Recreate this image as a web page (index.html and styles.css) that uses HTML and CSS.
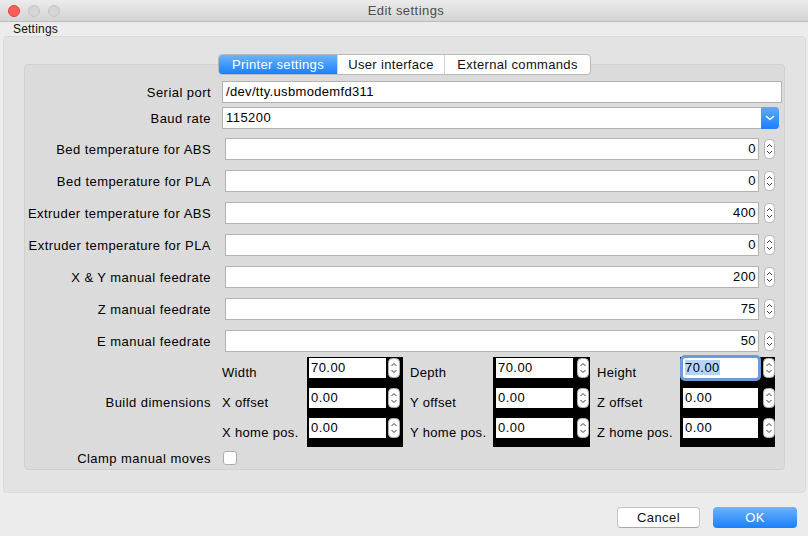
FILE: index.html
```html
<!DOCTYPE html>
<html>
<head>
<meta charset="utf-8">
<title>Edit settings</title>
<link rel="stylesheet" href="styles.css">
</head>
<body>
<div class="window">
  <div class="titlebar">
    <div class="lights">
      <span class="light red"></span>
      <span class="light gray"></span>
      <span class="light gray"></span>
    </div>
    <span class="title">Edit settings</span>
  </div>
  <div class="menubar">Settings</div>
  <div class="outer">
    <div class="pane">
      <div class="tabs">
        <div class="tab active t1">Printer settings</div>
        <div class="tab t2">User interface</div>
        <div class="tab t3">External commands</div>
      </div>
      <div class="form">
        <div class="row r-serial">
          <div class="lbl">Serial port</div>
          <div class="field"><div class="textbox">/dev/tty.usbmodemfd311</div></div>
        </div>
        <div class="row r-baud">
          <div class="lbl">Baud rate</div>
          <div class="field combo">
            <div class="combo-text">115200</div>
            <div class="combo-btn"><svg width="18" height="20" viewBox="0 0 18 20"><path d="M5.5 8.5 L9 11.5 L12.5 8.5" fill="none" stroke="#fff" stroke-width="1.6" stroke-linecap="round" stroke-linejoin="round"/></svg></div>
          </div>
        </div>
        <div class="row r-spin first">
          <div class="lbl">Bed temperature for ABS</div>
          <div class="field spin"><div class="spin-in">0</div><svg class="arr" width="11" height="20" viewBox="0 0 11 20"><rect x="0.5" y="0.5" width="10" height="19" rx="4" fill="#fff" stroke="#b3b3b3"/><path d="M3 8 L5.5 5.5 L8 8 M3 12 L5.5 14.5 L8 12" fill="none" stroke="#3a3a3a" stroke-width="1"/></svg></div>
        </div>
        <div class="row r-spin">
          <div class="lbl">Bed temperature for PLA</div>
          <div class="field spin"><div class="spin-in">0</div><svg class="arr" width="11" height="20" viewBox="0 0 11 20"><rect x="0.5" y="0.5" width="10" height="19" rx="4" fill="#fff" stroke="#b3b3b3"/><path d="M3 8 L5.5 5.5 L8 8 M3 12 L5.5 14.5 L8 12" fill="none" stroke="#3a3a3a" stroke-width="1"/></svg></div>
        </div>
        <div class="row r-spin">
          <div class="lbl">Extruder temperature for ABS</div>
          <div class="field spin"><div class="spin-in">400</div><svg class="arr" width="11" height="20" viewBox="0 0 11 20"><rect x="0.5" y="0.5" width="10" height="19" rx="4" fill="#fff" stroke="#b3b3b3"/><path d="M3 8 L5.5 5.5 L8 8 M3 12 L5.5 14.5 L8 12" fill="none" stroke="#3a3a3a" stroke-width="1"/></svg></div>
        </div>
        <div class="row r-spin">
          <div class="lbl">Extruder temperature for PLA</div>
          <div class="field spin"><div class="spin-in">0</div><svg class="arr" width="11" height="20" viewBox="0 0 11 20"><rect x="0.5" y="0.5" width="10" height="19" rx="4" fill="#fff" stroke="#b3b3b3"/><path d="M3 8 L5.5 5.5 L8 8 M3 12 L5.5 14.5 L8 12" fill="none" stroke="#3a3a3a" stroke-width="1"/></svg></div>
        </div>
        <div class="row r-spin">
          <div class="lbl">X &amp; Y manual feedrate</div>
          <div class="field spin"><div class="spin-in">200</div><svg class="arr" width="11" height="20" viewBox="0 0 11 20"><rect x="0.5" y="0.5" width="10" height="19" rx="4" fill="#fff" stroke="#b3b3b3"/><path d="M3 8 L5.5 5.5 L8 8 M3 12 L5.5 14.5 L8 12" fill="none" stroke="#3a3a3a" stroke-width="1"/></svg></div>
        </div>
        <div class="row r-spin">
          <div class="lbl">Z manual feedrate</div>
          <div class="field spin"><div class="spin-in">75</div><svg class="arr" width="11" height="20" viewBox="0 0 11 20"><rect x="0.5" y="0.5" width="10" height="19" rx="4" fill="#fff" stroke="#b3b3b3"/><path d="M3 8 L5.5 5.5 L8 8 M3 12 L5.5 14.5 L8 12" fill="none" stroke="#3a3a3a" stroke-width="1"/></svg></div>
        </div>
        <div class="row r-spin">
          <div class="lbl">E manual feedrate</div>
          <div class="field spin"><div class="spin-in">50</div><svg class="arr" width="11" height="20" viewBox="0 0 11 20"><rect x="0.5" y="0.5" width="10" height="19" rx="4" fill="#fff" stroke="#b3b3b3"/><path d="M3 8 L5.5 5.5 L8 8 M3 12 L5.5 14.5 L8 12" fill="none" stroke="#3a3a3a" stroke-width="1"/></svg></div>
        </div>
        <div class="row r-build">
          <div class="lbl">Build dimensions</div>
          <div class="field bgrid">
            <div class="bl">Width</div>
            <div class="bc"><div class="bin">70.00</div><svg class="barr" width="12" height="20" viewBox="0 0 12 20"><rect x="0.5" y="0.5" width="11" height="19" rx="4" fill="#fff" stroke="#b3b3b3"/><path d="M3.5 8 L6 5.5 L8.5 8 M3.5 12 L6 14.5 L8.5 12" fill="none" stroke="#3a3a3a" stroke-width="1"/></svg></div>
            <div class="bl pad">Depth</div>
            <div class="bc c2"><div class="bin">70.00</div><svg class="barr" width="12" height="20" viewBox="0 0 12 20"><rect x="0.5" y="0.5" width="11" height="19" rx="4" fill="#fff" stroke="#b3b3b3"/><path d="M3.5 8 L6 5.5 L8.5 8 M3.5 12 L6 14.5 L8.5 12" fill="none" stroke="#3a3a3a" stroke-width="1"/></svg></div>
            <div class="bl pad">Height</div>
            <div class="bc c3"><div class="bin focus"><span class="sel">70.00</span></div><svg class="barr" width="12" height="20" viewBox="0 0 12 20"><rect x="0.5" y="0.5" width="11" height="19" rx="4" fill="#fff" stroke="#b3b3b3"/><path d="M3.5 8 L6 5.5 L8.5 8 M3.5 12 L6 14.5 L8.5 12" fill="none" stroke="#3a3a3a" stroke-width="1"/></svg></div>

            <div class="bl">X offset</div>
            <div class="bc"><div class="bin">0.00</div><svg class="barr" width="12" height="20" viewBox="0 0 12 20"><rect x="0.5" y="0.5" width="11" height="19" rx="4" fill="#fff" stroke="#b3b3b3"/><path d="M3.5 8 L6 5.5 L8.5 8 M3.5 12 L6 14.5 L8.5 12" fill="none" stroke="#3a3a3a" stroke-width="1"/></svg></div>
            <div class="bl pad">Y offset</div>
            <div class="bc c2"><div class="bin">0.00</div><svg class="barr" width="12" height="20" viewBox="0 0 12 20"><rect x="0.5" y="0.5" width="11" height="19" rx="4" fill="#fff" stroke="#b3b3b3"/><path d="M3.5 8 L6 5.5 L8.5 8 M3.5 12 L6 14.5 L8.5 12" fill="none" stroke="#3a3a3a" stroke-width="1"/></svg></div>
            <div class="bl pad">Z offset</div>
            <div class="bc c3"><div class="bin">0.00</div><svg class="barr" width="12" height="20" viewBox="0 0 12 20"><rect x="0.5" y="0.5" width="11" height="19" rx="4" fill="#fff" stroke="#b3b3b3"/><path d="M3.5 8 L6 5.5 L8.5 8 M3.5 12 L6 14.5 L8.5 12" fill="none" stroke="#3a3a3a" stroke-width="1"/></svg></div>

            <div class="bl">X home pos.</div>
            <div class="bc"><div class="bin">0.00</div><svg class="barr" width="12" height="20" viewBox="0 0 12 20"><rect x="0.5" y="0.5" width="11" height="19" rx="4" fill="#fff" stroke="#b3b3b3"/><path d="M3.5 8 L6 5.5 L8.5 8 M3.5 12 L6 14.5 L8.5 12" fill="none" stroke="#3a3a3a" stroke-width="1"/></svg></div>
            <div class="bl pad">Y home pos.</div>
            <div class="bc c2"><div class="bin">0.00</div><svg class="barr" width="12" height="20" viewBox="0 0 12 20"><rect x="0.5" y="0.5" width="11" height="19" rx="4" fill="#fff" stroke="#b3b3b3"/><path d="M3.5 8 L6 5.5 L8.5 8 M3.5 12 L6 14.5 L8.5 12" fill="none" stroke="#3a3a3a" stroke-width="1"/></svg></div>
            <div class="bl pad">Z home pos.</div>
            <div class="bc c3"><div class="bin">0.00</div><svg class="barr" width="12" height="20" viewBox="0 0 12 20"><rect x="0.5" y="0.5" width="11" height="19" rx="4" fill="#fff" stroke="#b3b3b3"/><path d="M3.5 8 L6 5.5 L8.5 8 M3.5 12 L6 14.5 L8.5 12" fill="none" stroke="#3a3a3a" stroke-width="1"/></svg></div>
          </div>
        </div>
        <div class="row r-clamp">
          <div class="lbl">Clamp manual moves</div>
          <div class="field"><div class="checkbox"></div></div>
        </div>
      </div>
    </div>
  </div>
  <div class="buttons">
    <div class="btn cancel">Cancel</div>
    <div class="btn ok">OK</div>
  </div>
</div>
</body>
</html>
```

FILE: styles.css
```css
* { box-sizing: border-box; }

body {
  margin: 0;
  background: #ececec;
  font-family: "Liberation Sans", Arial, sans-serif;
  font-size: 13px;
  letter-spacing: 0.45px;
  color: #000;
}

.window {
  width: 808px;
  height: 536px;
  display: flex;
  flex-direction: column;
  overflow: hidden;
}

.titlebar {
  height: 22px;
  flex: none;
  position: relative;
  display: flex;
  align-items: center;
  justify-content: center;
  background: linear-gradient(#ebebeb, #d4d4d4);
  border-bottom: 1px solid #bcbcbc;
}

.lights {
  position: absolute;
  left: 8px;
  top: 5px;
  display: flex;
  gap: 8px;
}

.light {
  width: 12px;
  height: 12px;
  border-radius: 50%;
}

.light.red {
  background: #fc5f57;
  border: 1px solid #e0443e;
}

.light.gray {
  background: #d5d5d5;
  border: 1px solid #c2c2c2;
}

.title {
  color: #4d4d4d;
  padding-left: 4px;
}

.menubar {
  height: 14px;
  line-height: 14px;
  flex: none;
  padding-left: 13px;
  font-size: 12px;
  letter-spacing: 0.2px;
  color: #111;
}

.outer {
  flex: none;
  height: 457px;
  margin: 0 2px 0 3px;
  background: #e3e3e3;
  border: 1px solid #dadada;
  border-radius: 4px;
  padding: 27px 20px 0 20px;
}

.pane {
  position: relative;
  height: 406px;
  background: #dbdbdb;
  border: 1px solid #d0d0d0;
  border-radius: 4px;
  padding-top: 16px;
}

.tabs {
  position: absolute;
  top: -11px;
  left: 193px;
  display: flex;
  height: 21px;
  background: #fff;
  border: 1px solid #bababa;
  border-radius: 4px;
  overflow: hidden;
  letter-spacing: 0.33px;
}

.tab {
  display: flex;
  align-items: center;
  justify-content: center;
  height: 19px;
  color: #111;
}

.tab + .tab { border-left: 1px solid #d6d6d6; }
.tab.t1 { width: 118px; }
.tab.t2 { width: 107px; }
.tab.t3 { width: 146px; }

.tab.active {
  color: #fff;
  background: linear-gradient(#6db3fa, #1a80fb);
}

.form {
  display: flex;
  flex-direction: column;
}

.row {
  display: flex;
  align-items: center;
  gap: 11px;
}

.lbl {
  width: 186px;
  flex: none;
  text-align: right;
  white-space: nowrap;
}

.field { flex: 1; }

.r-serial { height: 22px; }

.textbox {
  height: 22px;
  margin-right: 2px;
  background: #fff;
  border: 1px solid #b3b3b3;
  padding-left: 3px;
  line-height: 20px;
  letter-spacing: 0.33px;
}

.r-baud { height: 22px; margin-top: 4px; }

.combo {
  display: flex;
  height: 22px;
  margin-right: 5px;
  background: #fff;
  border: 1px solid #b3b3b3;
  border-right: none;
  border-radius: 0 4px 4px 0;
}

.combo-text {
  flex: 1;
  padding-left: 3px;
  line-height: 20px;
}

.combo-btn {
  width: 18px;
  margin-top: -1px;
  height: 22px;
  display: flex;
  align-items: center;
  background: linear-gradient(#5ea9f8, #1a80fb);
  border-radius: 0 4px 4px 0;
}

.r-spin { height: 22px; margin-top: 10px; }
.r-spin.first { margin-top: 9px; }

.spin {
  display: flex;
  align-items: center;
  gap: 5px;
  margin-left: 3px;
  margin-right: 9px;
}

.spin-in {
  flex: 1;
  height: 22px;
  background: #fff;
  border: 1px solid #b3b3b3;
  text-align: right;
  padding-right: 2px;
  line-height: 20px;
}

.arr { flex: none; display: block; }

.r-build { height: 90px; margin-top: 5px; }

.bgrid {
  display: grid;
  grid-template-columns: 85px 96px 90px 97px 90px 95px;
  grid-template-rows: repeat(3, 30px);
}

.bl {
  align-self: center;
  white-space: nowrap;
  padding-top: 1px;
  letter-spacing: 0.33px;
}

.bl.pad { padding-left: 7px; }

.bc {
  background: #000;
  display: flex;
  align-items: flex-start;
  gap: 2px;
  padding: 1px 0 0 2px;
}

.bc.c2 { padding-left: 3px; gap: 4px; }
.bc.c3 { padding-left: 3px; gap: 5px; }

.bin {
  width: 77px;
  height: 20px;
  background: #fff;
  line-height: 19px;
  padding-left: 2px;
}

.bin.focus {
  border-radius: 2px;
  box-shadow: 0 0 0 3px #6c9bd9;
}

.sel { background: #b4d6fe; }

.barr { flex: none; display: block; margin-top: 0; }

.r-clamp { height: 20px; margin-top: 1px; }

.checkbox {
  width: 14px;
  height: 14px;
  margin-left: 1px;
  background: #fff;
  border: 1px solid #acacac;
  border-radius: 3px;
}

.buttons {
  display: flex;
  justify-content: flex-end;
  gap: 13px;
  padding: 14px 11px 0 0;
}

.btn {
  height: 21px;
  display: flex;
  align-items: center;
  justify-content: center;
  border-radius: 4px;
}

.cancel {
  width: 83px;
  background: #fff;
  border: 1px solid #c5c5c5;
  border-bottom-color: #aaa;
  color: #111;
}

.ok {
  width: 84px;
  color: #fff;
  background: linear-gradient(#6db3fa, #1a80fb);
}
```
